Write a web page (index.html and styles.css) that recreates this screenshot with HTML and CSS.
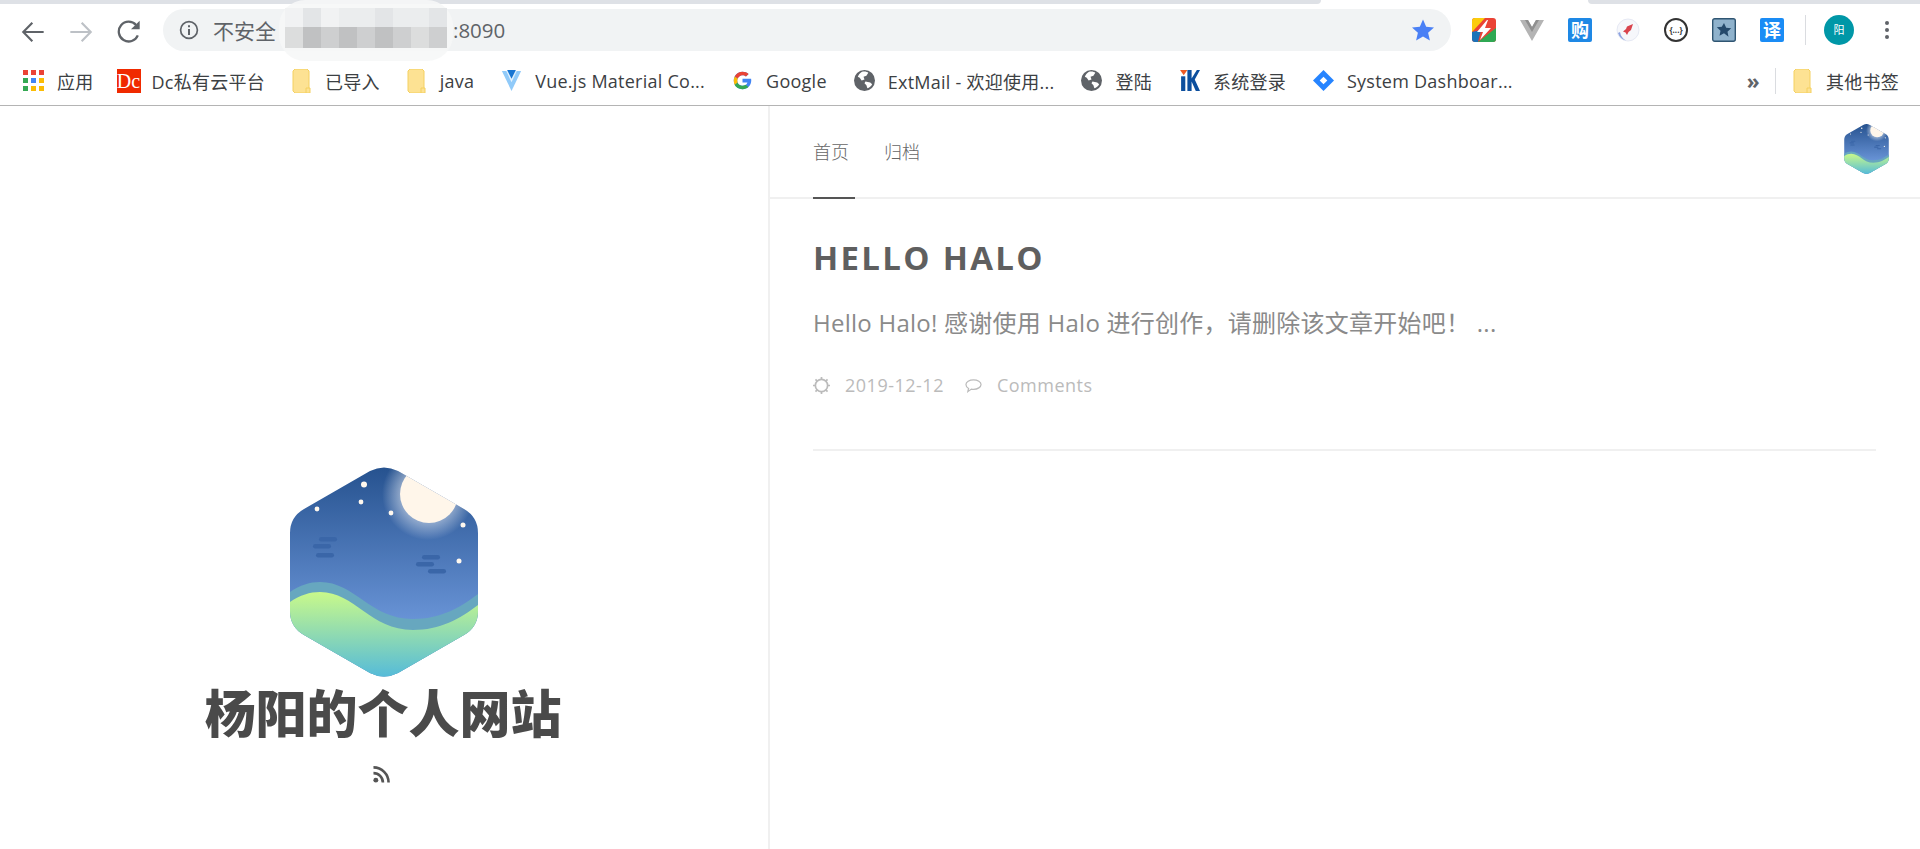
FILE: index.html
```html
<!DOCTYPE html>
<html lang="zh-CN">
<head>
    <meta charset="UTF-8">
    <title>杨阳的个人网站</title>
    <link rel="stylesheet" href="styles.css">
</head>
<body>
    <!-- Browser chrome -->
    <div class="tabstrip">
        <div class="tab-left"></div>
        <div class="tab-active"></div>
        <div class="tab-right"></div>
    </div>

    <div class="toolbar">
        <svg class="tool" viewBox="3 3 18 18"><path d="M20 12H5M11.500 5L4.700 12l6.800 7" fill="none" stroke="#5f6368" stroke-width="1.600"/></svg>
        <svg class="tool" viewBox="3 3 18 18"><path d="M4 12h15M12.500 5l6.800 7-6.800 7" fill="none" stroke="#bdc1c6" stroke-width="1.600"/></svg>
        <svg class="tool" viewBox="3 3 18 18"><path d="M18.600 14.500A7.400 7.400 0 1 1 17.300 6.800" fill="none" stroke="#5f6368" stroke-width="1.700"/><path d="M20 3.500V10h-6.500z" fill="#5f6368"/></svg>

        <div class="omnibox">
            <svg class="info" viewBox="0 0 20 20"><circle cx="10" cy="10" r="8.400" fill="none" stroke="#5f6368" stroke-width="1.700"/><path d="M9 9h2v6H9zM9 5.200h2v2H9z" fill="#5f6368"/></svg>
            <span class="url-label">不安全</span>
            <span class="url-port">:8090</span>
            <svg class="bookmark-star" viewBox="0 0 24 24"><path d="M12 1.500l3.200 7.300 7.800.7-5.900 5.200 1.800 7.800L12 18.400l-6.900 4.100 1.800-7.800L1 9.500l7.800-.7z" fill="#4a80f5"/></svg>
        </div>

        <div class="ext ext-bolt">
            <svg viewBox="0 0 24 24"><rect width="24" height="24" rx="3" fill="#ea4335"/><path d="M0 3a3 3 0 0 1 3-3h10L0 14z" fill="#fbcc0c"/><path d="M0 14L9 12 6 24H3a3 3 0 0 1-3-3z" fill="#1a73b8"/><path d="M24 10v11a3 3 0 0 1-3 3H6z" fill="#2fa853"/><path d="M15 2L5 14h6l-3 8 11-12h-6l3-8z" fill="#fff"/></svg>
        </div>
        <div class="ext">
            <svg viewBox="0 0 24 24"><path d="M0 2h8l4 7 4-7h8L12 23z" fill="#b4b4b4"/><path d="M5 2h3l4 7 4-7h3l-7 12z" fill="#8f8f8f"/></svg>
        </div>
        <div class="ext"><span class="ext-square">购</span></div>
        <div class="ext">
            <svg viewBox="0 0 24 24"><circle cx="12" cy="12" r="11" fill="#f6f7fb" stroke="#e6e9f4"/><path d="M2 15a11 11 0 0 0 8 7.500A12 12 0 0 1 4 14z" fill="#8ea4e0"/><path d="M17 6l-2 6-2.500 2-1.500 3-1.500-2.500-2.500-1 3-2.500 1-2.500z" fill="#d9434d"/></svg>
        </div>
        <div class="ext"><span class="ext-json">{...}</span></div>
        <div class="ext">
            <svg viewBox="0 0 24 24"><rect x=".7" y=".7" width="22.600" height="22.600" rx="2" fill="#8fb2cc" stroke="#2f5572" stroke-width="1.400"/><path d="M12 5l2.200 4.700 5 .6-3.700 3.400 1 5L12 15.300l-4.500 2.400 1-5-3.700-3.400 5-.6z" fill="#24496b"/></svg>
        </div>
        <div class="ext"><span class="ext-square ext-fanyi">译</span></div>
        <div class="tool-sep"></div>
        <div class="profile">阳</div>
        <svg class="menu-dots" viewBox="0 0 6 24"><circle cx="3" cy="5" r="2" fill="#5f6368"/><circle cx="3" cy="12" r="2" fill="#5f6368"/><circle cx="3" cy="19" r="2" fill="#5f6368"/></svg>
    </div>

    <!-- Redacted part of the address -->
    <div class="redact">
        <div class="redact-row">
            <i class="r1"></i><i class="r2"></i><i class="r1"></i><i class="r3"></i><i class="r3"></i><i class="r2"></i><i class="r3"></i><i class="r3"></i><i class="r2"></i>
        </div>
        <div class="redact-row redact-dark">
            <i class="d1"></i><i class="d2"></i><i class="d3"></i><i class="d2"></i><i class="d3"></i><i class="d2"></i><i class="d3"></i><i class="d1"></i><i class="d3"></i>
        </div>
    </div>

    <div class="bookmarks">
        <a class="bm bm-apps">
            <svg class="bm-icon apps" viewBox="0 0 21 21"><rect width="5" height="5" fill="#ea4335"/><rect x="8" width="5" height="5" fill="#ea4335"/><rect x="16" width="5" height="5" fill="#ea4335"/><rect y="8" width="5" height="5" fill="#34a853"/><rect x="8" y="8" width="5" height="5" fill="#4285f4"/><rect x="16" y="8" width="5" height="5" fill="#fbbc05"/><rect y="16" width="5" height="5" fill="#34a853"/><rect x="8" y="16" width="5" height="5" fill="#fbbc05"/><rect x="16" y="16" width="5" height="5" fill="#fbbc05"/></svg>
            应用
        </a>
        <a class="bm bm-dc"><span class="dc-icon">Dc</span>Dc私有云平台</a>
        <a class="bm"><svg class="bm-icon folder" viewBox="0 0 18 24"><path d="M2 0h12l2 2v20l-2 2H2l-2-2V2z" fill="#fde293" stroke="#f4d061"/><path d="M13 24v-5h4v5z" fill="#fde293" stroke="#f4d061"/></svg>已导入</a>
        <a class="bm"><svg class="bm-icon folder" viewBox="0 0 18 24"><path d="M2 0h12l2 2v20l-2 2H2l-2-2V2z" fill="#fde293" stroke="#f4d061"/><path d="M13 24v-5h4v5z" fill="#fde293" stroke="#f4d061"/></svg>java</a>
        <a class="bm"><svg class="bm-icon" viewBox="0 0 22 24"><path d="M0 1h22L11 24z" fill="#90caf9"/><path d="M5 1h12l-6 13z" fill="#e3f2fd"/><path d="M6 0h10l-5 10z" fill="#1976d2"/></svg>Vue.js Material Co...</a>
        <a class="bm"><svg class="bm-icon" viewBox="0 0 48 48"><path d="M43.600 20H24v8.500h11.300C33.700 33.300 29.300 36 24 36c-6.600 0-12-5.400-12-12s5.400-12 12-12c3 0 5.800 1.100 7.900 3l6-6C34.300 5.700 29.400 4 24 4 13 4 4 13 4 24s9 20 20 20 20-9 20-20c0-1.300-.1-2.700-.4-4z" fill="#4285f4"/><path d="M6.300 14.700l7 5.100C15.100 15.200 19.200 12 24 12c3 0 5.800 1.100 7.900 3l6-6C34.300 5.700 29.400 4 24 4 16.300 4 9.700 8.300 6.300 14.700z" fill="#ea4335"/><path d="M24 44c5.200 0 9.900-1.800 13.500-4.900l-6.500-5.300C29 35.200 26.600 36 24 36c-5.300 0-9.700-2.700-11.300-7.500l-7 5.400C9.100 39.600 16 44 24 44z" fill="#34a853"/><path d="M6.300 14.700C4.800 17.500 4 20.600 4 24s.8 6.700 2.300 9.600l7-5.400C12.500 26.800 12 25.400 12 24s.5-2.900 1.300-4.200z" fill="#fbbc05"/></svg>Google</a>
        <a class="bm"><svg class="bm-icon globe" viewBox="0 0 22 22"><circle cx="11" cy="11" r="11" fill="#5f6368"/><path d="M8 2c3-1 6 0 7 1l-2 3-3 1 1 3-3 1-2-3-2-1c1-2 2-4 4-5zM12 12l5 1 2 2c-1 2-3 4-5 4l-1-3-2-2z" fill="#fff"/></svg>ExtMail - 欢迎使用...</a>
        <a class="bm"><svg class="bm-icon globe" viewBox="0 0 22 22"><circle cx="11" cy="11" r="11" fill="#5f6368"/><path d="M8 2c3-1 6 0 7 1l-2 3-3 1 1 3-3 1-2-3-2-1c1-2 2-4 4-5zM12 12l5 1 2 2c-1 2-3 4-5 4l-1-3-2-2z" fill="#fff"/></svg>登陆</a>
        <a class="bm"><svg class="bm-icon" viewBox="0 0 20 20"><path d="M1 0h7L4.500 5z" fill="#ee5a24"/><rect x="2" y="6" width="4" height="14" fill="#0d4f9e"/><path d="M8 0h4v8l5-8h3l-5 9 5 11h-4l-4-9v9H8z" fill="#0d4f9e"/></svg>系统登录</a>
        <a class="bm"><svg class="bm-icon" viewBox="0 0 22 22"><path d="M11 0l11 11-11 11L0 11z" fill="#2684ff"/><path d="M11 7l4 4-4 4-4-4z" fill="#fff"/></svg>System Dashboar...</a>
        <span class="bm-more">»</span>
        <div class="bm-sep"></div>
        <a class="bm bm-last"><svg class="bm-icon folder" viewBox="0 0 18 24"><path d="M2 0h12l2 2v20l-2 2H2l-2-2V2z" fill="#fde293" stroke="#f4d061"/><path d="M13 24v-5h4v5z" fill="#fde293" stroke="#f4d061"/></svg>其他书签</a>
    </div>

    <!-- Blog page -->
    <main class="page">
        <aside class="cover">
            <svg class="logo" viewBox="0 0 188 210">
                <defs>
                    <linearGradient id="sky" x1="0" y1="0" x2="0" y2="1">
                        <stop offset="0" stop-color="#26528f"/>
                        <stop offset=".75" stop-color="#6a95d8"/>
                    </linearGradient>
                    <linearGradient id="grass" x1="0" y1="0" x2="0" y2="1">
                        <stop offset="0" stop-color="#c9f98a"/>
                        <stop offset="1" stop-color="#55bbd9"/>
                    </linearGradient>
                    <radialGradient id="glow">
                        <stop offset=".6" stop-color="#fff" stop-opacity=".45"/>
                        <stop offset="1" stop-color="#fff" stop-opacity="0"/>
                    </radialGradient>
                    <clipPath id="hex">
                        <path d="M80 4Q94-3 108 4L174 42Q188 50 188 66V144Q188 160 174 168L108 206Q94 213 80 206L14 168Q0 160 0 144V66Q0 50 14 42Z"/>
                    </clipPath>
                    <symbol id="halo" viewBox="0 0 188 210">
                        <g clip-path="url(#hex)">
                            <rect width="188" height="210" fill="url(#sky)"/>
                            <circle cx="138" cy="27" r="46" fill="url(#glow)"/>
                            <circle cx="139" cy="27" r="29" fill="#fff6ea"/>
                            <g fill="#3a66a8">
                                <rect x="29" y="70" width="18" height="4.500" rx="2.200"/>
                                <rect x="23" y="77" width="18" height="4.500" rx="2.200"/>
                                <rect x="26" y="86" width="18" height="4.500" rx="2.200"/>
                                <rect x="132" y="88" width="18" height="4.500" rx="2.200"/>
                                <rect x="126" y="95" width="18" height="4.500" rx="2.200"/>
                                <rect x="138" y="102" width="18" height="4.500" rx="2.200"/>
                            </g>
                            <g fill="#fff8ee">
                                <circle cx="74" cy="17.500" r="3"/>
                                <circle cx="27" cy="42" r="2.400"/>
                                <circle cx="71" cy="35" r="2.400"/>
                                <circle cx="101" cy="46" r="2.400"/>
                                <circle cx="173" cy="58" r="2.500"/>
                                <circle cx="169" cy="94" r="2.500"/>
                            </g>
                            <path d="M0 125C10 118 20 115 30 115C65 115 80 152 123 152C150 152 170 141 188 127V210H0Z" fill="#67a7bf"/>
                            <path d="M0 135C10 128 20 125 30 125C65 125 80 163 123 163C150 163 170 152 188 138V210H0Z" fill="url(#grass)"/>
                        </g>
                    </symbol>
                </defs>
                <use href="#halo"/>
            </svg>
            <h1 class="site-title">杨阳的个人网站</h1>
            <svg class="rss" viewBox="0 0 18 18"><circle cx="3" cy="15" r="2.600" fill="#555"/><path d="M.5 7.500a10 10 0 0 1 10 10M.5 1.500a16 16 0 0 1 16 16" fill="none" stroke="#555" stroke-width="2.800"/></svg>
        </aside>

        <section class="content">
            <nav class="nav">
                <a class="nav-link active">首页</a>
                <a class="nav-link">归档</a>
                <svg class="nav-avatar" viewBox="0 0 188 210"><use href="#halo"/></svg>
            </nav>

            <article class="post">
                <h2 class="post-title">HELLO HALO</h2>
                <p class="post-summary">Hello Halo! 感谢使用 Halo 进行创作，请删除该文章开始吧！ ...</p>
                <div class="post-meta">
                    <svg class="meta-icon" viewBox="0 0 18 18"><circle cx="9" cy="9" r="6.500" fill="none" stroke="#bbb" stroke-width="1.800"/><path d="M9 0v3M9 15v3M0 9h3M15 9h3M2.600 2.600l2.100 2.100M13.300 13.300l2.100 2.100M2.600 15.400l2.100-2.100M13.300 4.700l2.100-2.100" stroke="#bbb" stroke-width="1.800"/></svg>
                    <span class="meta-date">2019-12-12</span>
                    <svg class="meta-icon" viewBox="0 0 18 18"><path d="M9 3c4.400 0 8 2.300 8 5s-3.600 5-8 5c-.8 0-1.500-.1-2.200-.2L3 15.500l.8-3.400C2 11.200 1 9.700 1 8c0-2.700 3.600-5 8-5z" fill="none" stroke="#bbb" stroke-width="1.300"/></svg>
                    <span>Comments</span>
                </div>
            </article>
        </section>
    </main>
</body>
</html>
```

FILE: styles.css
```css
* {
    box-sizing: border-box;
}

html, body {
    height: 100%;
}

body {
    margin: 0;
    height: 100vh;
    overflow: hidden;
    display: flex;
    flex-direction: column;
    background: #fff;
    font-family: "Open Sans", "Noto Sans CJK SC", sans-serif;
    position: relative;
}

/* Browser chrome */
.tabstrip {
    display: flex;
    height: 4px;
    flex: none;
}

.tab-left {
    width: 1321px;
    background: #dee1e6;
    border-bottom-right-radius: 4px;
}

.tab-active {
    width: 267px;
}

.tab-right {
    flex: 1;
    background: #dee1e6;
    border-bottom-left-radius: 4px;
}

.toolbar {
    height: 56px;
    flex: none;
    display: flex;
    align-items: center;
    padding-left: 21px;
}

.tool {
    width: 24px;
    height: 24px;
    margin-right: 24px;
    flex: none;
}

.tool:nth-child(3) {
    margin-right: 22px;
}

.omnibox {
    width: 1288px;
    height: 42px;
    margin-top: -4px;
    display: flex;
    align-items: center;
    background: #f1f3f4;
    border-radius: 21px;
    padding: 0 16px;
    color: #5f6368;
    font-size: 20.500px;
}

.info {
    width: 20px;
    height: 20px;
    margin-right: 14px;
    flex: none;
}

.url-label {
    width: 240px;
    font-size: 21px;
}

.bookmark-star {
    width: 24px;
    height: 24px;
    margin-left: auto;
}

.ext {
    width: 48px;
    height: 40px;
    margin-top: -4px;
    display: flex;
    align-items: center;
    justify-content: center;
    flex: none;
}

.ext-bolt {
    margin-left: 9px;
}

.ext svg {
    width: 24px;
    height: 24px;
}

.ext-square {
    width: 24px;
    height: 24px;
    background: #1e88e5;
    color: #fff;
    font-size: 18px;
    font-weight: 700;
    line-height: 24px;
    text-align: center;
    border-radius: 2px;
}

.ext-fanyi {
    background: #1a8cf5;
}

.ext-json {
    width: 24px;
    height: 24px;
    border: 2px solid #333;
    border-radius: 50%;
    color: #333;
    font-size: 8px;
    font-weight: 700;
    line-height: 19px;
    text-align: center;
}

.tool-sep {
    width: 1px;
    height: 30px;
    margin: -4px 18px 0 9px;
    background: #dadce0;
}

.profile {
    width: 30px;
    height: 30px;
    margin-top: -4px;
    border-radius: 50%;
    background: #0097a7;
    color: #fff;
    font-size: 11px;
    line-height: 30px;
    text-align: center;
    flex: none;
}

.menu-dots {
    width: 6px;
    height: 24px;
    margin: -4px 0 0 30px;
    flex: none;
}

/* Blurred block that hides the host name */
.redact {
    position: absolute;
    left: 279px;
    top: 0;
    width: 174px;
    height: 61px;
    padding: 8px 6px 0;
    background: rgba(246, 247, 247, .9);
    border-radius: 26px;
}

.redact-row {
    display: flex;
    height: 19px;
}

.redact-dark {
    height: 21px;
}

.redact-row i {
    flex: 1;
}

.r1 { background: #f1f2f3; }
.r2 { background: #e3e5e7; }
.r3 { background: #ebedee; }
.d1 { background: #dcdddd; }
.d2 { background: #c0c1c2; }
.d3 { background: #cecfd0; }

.bookmarks {
    height: 46px;
    flex: none;
    display: flex;
    align-items: center;
    padding: 0 0 4px 23px;
    border-bottom: 1px solid #b4b4b4;
    color: #3c4043;
    font-size: 18px;
    letter-spacing: .25px;
}

.bm {
    display: flex;
    align-items: center;
    gap: 13px;
    margin-right: 27px;
    white-space: nowrap;
}

.bm-apps {
    margin-right: 23px;
}

.bm-dc {
    gap: 11px;
}

.bm-icon {
    width: 21px;
    height: 21px;
    flex: none;
}

.folder {
    width: 20px;
    height: 24px;
}

.dc-icon {
    width: 24px;
    height: 24px;
    background: #f02a00;
    color: #fff;
    font-family: "Liberation Serif", serif;
    font-size: 20px;
    line-height: 24px;
    letter-spacing: 0;
    text-align: center;
    flex: none;
}

.bm-more {
    margin-left: auto;
    font-size: 21px;
    font-weight: 700;
    color: #5f6368;
}

.bm-sep {
    width: 1px;
    height: 26px;
    margin: 0 17px 0 15px;
    background: #dadce0;
}

.bm-last {
    margin-right: 21px;
}

/* Blog page */
.page {
    flex: 1;
    display: flex;
    min-height: 0;
}

.cover {
    width: 770px;
    flex: none;
    display: flex;
    flex-direction: column;
    align-items: center;
    justify-content: flex-end;
    padding-bottom: 66px;
    border-right: 2px solid #f0f0f0;
}

.logo {
    width: 188px;
    height: 210px;
}

.site-title {
    margin: 1px 2px 0 0;
    height: 70px;
    color: #4a4a4a;
    font-size: 51px;
    font-weight: 900;
    line-height: 70px;
}

.rss {
    width: 17px;
    height: 17px;
    margin: 18px 5px 0 0;
}

.content {
    flex: 1;
    min-width: 0;
}

.nav {
    height: 93px;
    display: flex;
    align-items: stretch;
    padding: 0 29px 0 43px;
    border-bottom: 2px solid #f0f0f0;
}

.nav-link {
    width: 42px;
    margin: 0 29px -2px 0;
    padding-top: 31px;
    border-bottom: 2px solid transparent;
    color: #666;
    font-size: 18px;
    font-weight: 300;
    line-height: 30px;
}

.nav-link.active {
    border-bottom-color: #555;
}

.nav-avatar {
    width: 49px;
    height: 50px;
    margin: 18px 0 0 auto;
}

.post {
    margin: 0 44px 0 43px;
    padding: 39px 0 51px;
    border-bottom: 2px solid #f0f0f0;
}

.post-title {
    margin: 0;
    color: #5f5f5f;
    font-size: 33px;
    font-weight: 700;
    line-height: 40px;
    letter-spacing: 2.300px;
}

.post-summary {
    margin: 28px 0 0;
    color: #8a8a8a;
    font-size: 24px;
    line-height: 34px;
    letter-spacing: .25px;
}

.post-meta {
    margin-top: 32px;
    display: flex;
    align-items: center;
    height: 26px;
    color: #bbb;
    font-size: 18px;
    letter-spacing: .5px;
}

.meta-icon {
    width: 17px;
    height: 17px;
    margin-right: 15px;
    flex: none;
}

.meta-date {
    margin-right: 21px;
}
```
